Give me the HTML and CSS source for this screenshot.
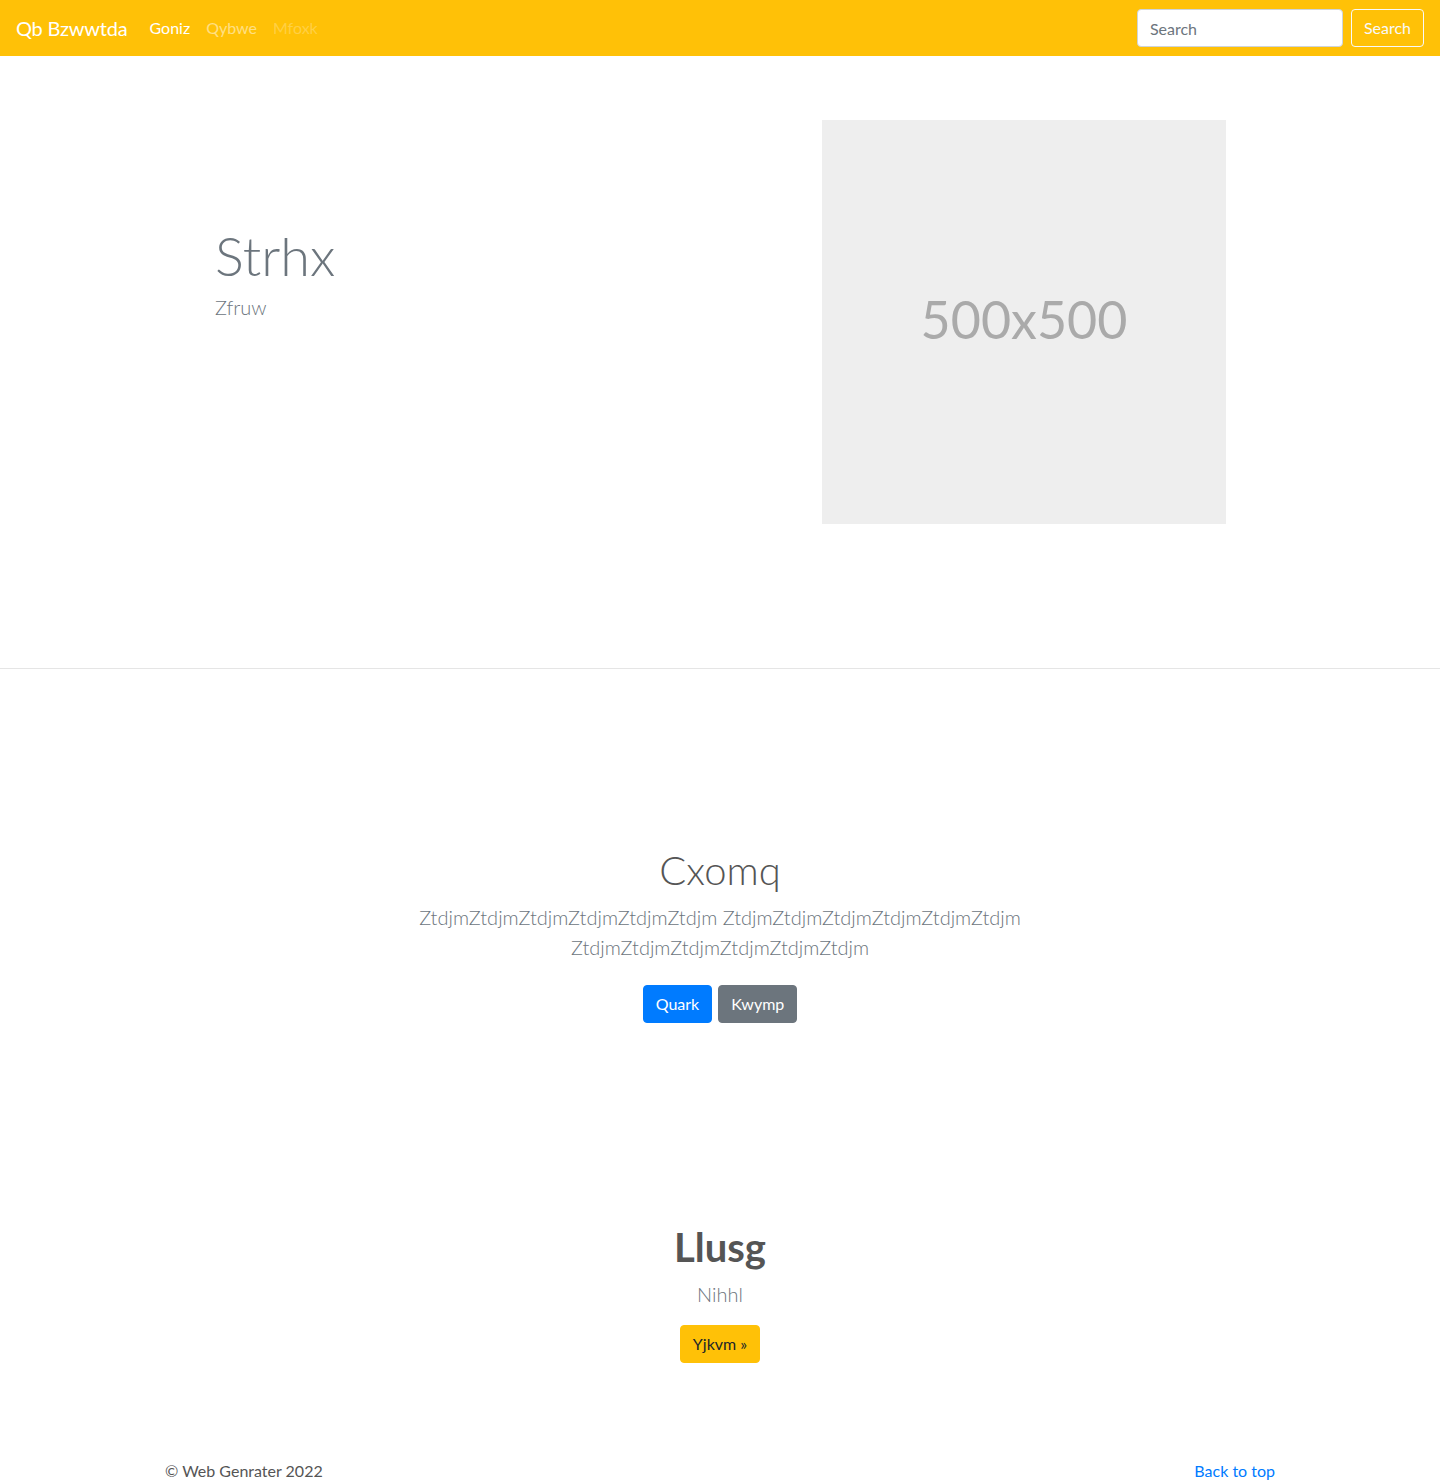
FILE: index.html
```html
<!DOCTYPE html>
<html lang="en">
<head>
<meta charset="utf-8">
<title>Qb Bzwwtda</title>
<link rel="stylesheet" href="styles.css">
</head>
<body>
<nav class="navbar">
  <a class="brand" href="#">Qb Bzwwtda</a>
  <ul class="nav">
    <li><a class="nav-link active" href="#">Goniz</a></li>
    <li><a class="nav-link" href="#">Qybwe</a></li>
    <li><a class="nav-link disabled" href="#">Mfoxk</a></li>
  </ul>
  <form class="search">
    <input class="search-input" type="text" placeholder="Search">
    <button class="btn btn-outline-light" type="button">Search</button>
  </form>
</nav>

<section class="hero">
  <div class="hero-text">
    <h1 class="hero-title">Strhx</h1>
    <p class="hero-lead">Zfruw</p>
  </div>
  <div class="placeholder"><span>500x500</span></div>
</section>

<hr class="divider">

<section class="intro">
  <h1 class="intro-title">Cxomq</h1>
  <p class="intro-lead">ZtdjmZtdjmZtdjmZtdjmZtdjmZtdjm ZtdjmZtdjmZtdjmZtdjmZtdjmZtdjm ZtdjmZtdjmZtdjmZtdjmZtdjmZtdjm</p>
  <div class="actions">
    <a class="btn btn-primary" href="#">Quark</a>
    <a class="btn btn-secondary" href="#">Kwymp</a>
  </div>
</section>

<section class="feature">
  <h1 class="feature-title">Llusg</h1>
  <p class="feature-lead">Nihhl</p>
  <a class="btn btn-warning" href="#">Yjkvm &raquo;</a>
</section>

<footer class="footer">
  <p class="copy">&copy; Web Genrater 2022</p>
  <a class="back" href="#">Back to top</a>
</footer>
</body>
</html>
```
FILE: styles.css
```css
* { box-sizing: border-box; }
html, body { margin: 0; padding: 0; }
body {
  font-family: "Segoe UI", Lato, "Open Sans", "Liberation Sans", sans-serif;
  font-size: 16px;
  line-height: 1.5;
  color: #212529;
  background: #fff;
}
a { text-decoration: none; }

.navbar {
  height: 56px;
  background: #ffc107;
  display: flex;
  align-items: center;
  padding: 0 16px;
}
.brand {
  color: #fff;
  font-size: 20px;
  line-height: 30px;
  margin-right: 14px;
  letter-spacing: -0.2px;
}
.nav {
  list-style: none;
  margin: 0;
  padding: 0;
  display: flex;
  flex: 1;
}
.nav-link {
  display: block;
  padding: 8px;
  color: rgba(255,255,255,.5);
}
.nav-link.active { color: #fff; }
.nav-link.disabled { color: rgba(255,255,255,.25); }
.search { display: flex; align-items: center; }
.search-input {
  width: 206px;
  height: 38px;
  padding: 6px 12px;
  font: inherit;
  color: #495057;
  border: 1px solid #ced4da;
  border-radius: 4px;
  margin-right: 8px;
}
.search-input::placeholder { color: #6c757d; }

.btn {
  display: inline-block;
  font-family: inherit;
  font-size: 16px;
  line-height: 24px;
  padding: 6px 12px;
  border: 1px solid transparent;
  border-radius: 4px;
  cursor: pointer;
}
.btn-outline-light { background: transparent; color: #f8f9fa; border-color: #f8f9fa; }
.btn-primary { background: #007bff; border-color: #007bff; color: #fff; }
.btn-secondary { background: #6c757d; border-color: #6c757d; color: #fff; }
.btn-warning { background: #ffc107; border-color: #ffc107; color: #212529; }

.hero {
  display: flex;
  padding: 64px 0 144px 215px;
}
.hero-text {
  width: 607px;
  padding-top: 104px;
}
.hero-title {
  margin: 0 0 3px;
  font-size: 54px;
  font-weight: 300;
  line-height: 1.2;
  color: #6c757d;
}
.hero-lead {
  margin: 0;
  font-size: 20px;
  font-weight: 300;
  color: #6c757d;
}
.placeholder {
  width: 404px;
  height: 404px;
  background: #eee;
  display: flex;
  align-items: center;
  justify-content: center;
}
.placeholder span {
  font-size: 52px;
  line-height: 1;
  margin-bottom: 6px;
  color: #aaa;
}

.divider {
  margin: 0;
  border: 0;
  border-top: 1px solid #e5e5e5;
}

.intro {
  text-align: center;
  padding-top: 177px;
}
.intro-title {
  margin: 0 0 8px;
  font-size: 40px;
  font-weight: 300;
  line-height: 1.2;
  color: #555;
}
.intro-lead {
  max-width: 700px;
  margin: 0 auto 23px;
  font-size: 20px;
  font-weight: 300;
  line-height: 30px;
  color: #6c757d;
}
.actions .btn { margin: 0 1px; }

.feature {
  text-align: center;
  padding-top: 200px;
}
.feature-title {
  margin: 0 0 8px;
  font-size: 40px;
  font-weight: 700;
  line-height: 1.2;
  color: #555;
}
.feature-lead {
  margin: 0 0 16px;
  font-size: 20px;
  font-weight: 300;
  color: #6c757d;
}

.footer {
  max-width: 1140px;
  margin: 0 auto;
  padding: 96px 15px 0;
  display: flex;
  justify-content: space-between;
  align-items: baseline;
}
.copy { margin: 0; color: #555; }
.back { color: #007bff; }
```
